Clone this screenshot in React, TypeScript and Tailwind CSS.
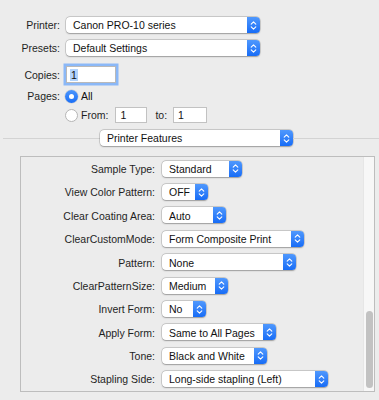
import React from "react";

const font = { fontFamily: '"Liberation Sans", Arial, sans-serif' };

function Chevrons() {
  return (
    <svg width="7" height="11" viewBox="0 0 7 11" fill="none">
      <polyline points="1.2,4.2 3.5,1.9 5.8,4.2" stroke="white" strokeWidth="1.1" strokeLinecap="round" strokeLinejoin="round" />
      <polyline points="1.2,6.8 3.5,9.1 5.8,6.8" stroke="white" strokeWidth="1.1" strokeLinecap="round" strokeLinejoin="round" />
    </svg>
  );
}

function Popup({ value, width }: { value: string; width: number }) {
  return (
    <div
      className="flex h-[16px] shrink-0 items-stretch rounded-[4px] bg-white shadow-[0_0_0_0.5px_rgba(0,0,0,0.22),0_0.5px_1.5px_rgba(0,0,0,0.25)]"
      style={{ width }}
    >
      <div className="flex flex-1 items-center overflow-hidden whitespace-nowrap pl-[7px] pt-px text-[10.5px] leading-none text-[#111111]">
        {value}
      </div>
      <div className="flex w-[13px] items-center justify-center rounded-r-[4px] bg-gradient-to-b from-[#4f98fd] to-[#166cf6]">
        <Chevrons />
      </div>
    </div>
  );
}

const rows: [string, string, number][] = [
  ["Sample Type:", "Standard", 80],
  ["View Color Pattern:", "OFF", 46],
  ["Clear Coating Area:", "Auto", 64],
  ["ClearCustomMode:", "Form Composite Print", 142],
  ["Pattern:", "None", 134],
  ["ClearPatternSize:", "Medium", 66],
  ["Invert Form:", "No", 44],
  ["Apply Form:", "Same to All Pages", 114],
  ["Tone:", "Black and White", 105],
  ["Stapling Side:", "Long-side stapling (Left)", 166],
];

function Label({ children }: { children: React.ReactNode }) {
  return (
    <div className="w-[60px] shrink-0 pt-px text-right text-[10.5px] leading-none text-[#1f1f1f]">{children}</div>
  );
}

export default function App() {
  return (
    <div className="relative h-[400px] w-[379px] overflow-hidden bg-[#ececec]" style={font}>
      {/* Printer */}
      <div className="mt-[17px] flex h-[16px] items-center gap-[6px]">
        <Label>Printer:</Label>
        <Popup value="Canon PRO-10 series" width={194} />
      </div>
      {/* Presets */}
      <div className="mt-[7px] flex h-[16px] items-center gap-[6px]">
        <Label>Presets:</Label>
        <Popup value="Default Settings" width={194} />
      </div>
      {/* Copies */}
      <div className="mt-[10px] flex h-[17px] items-center gap-[6px]">
        <Label>Copies:</Label>
        <div className="flex h-[17px] w-[50px] items-center border border-[#b9b9b9] bg-white pl-[3px] pt-px shadow-[0_0_0_2.5px_#8bb8f7] text-[10.5px] leading-none text-[#111111]">
          <span className="bg-[#b3d4fc] px-[1px] py-[1px]">1</span>
        </div>
      </div>
      {/* Pages */}
      <div className="mt-[6px] flex h-[14px] items-center gap-[5px]">
        <Label>Pages:</Label>
        <div className="flex h-[13px] w-[13px] items-center justify-center rounded-full bg-gradient-to-b from-[#4b95fc] to-[#186ef6] shadow-[0_0_0_0.5px_rgba(0,0,0,0.15)]">
          <div className="h-[5px] w-[5px] rounded-full bg-white" />
        </div>
        <span className="-ml-[2px] pt-px text-[10.5px] leading-none text-[#111111]">All</span>
      </div>
      {/* From */}
      <div className="mt-[4px] flex h-[16px] items-center">
        <div className="ml-[65px] h-[13px] w-[13px] rounded-full border border-[#b5b5b5] bg-white" />
        <span className="ml-[3px] pt-px text-[10.5px] leading-none text-[#1f1f1f]">From:</span>
        <div className="ml-[7px] flex h-[16px] w-[32px] items-center border border-[#c2c2c2] bg-white pl-[4px] pt-px text-[10.5px] leading-none text-[#111111]">
          1
        </div>
        <span className="ml-[8px] pt-px text-[10.5px] leading-none text-[#1f1f1f]">to:</span>
        <div className="ml-[6px] flex h-[16px] w-[34px] items-center border border-[#c2c2c2] bg-white pl-[4px] pt-px text-[10.5px] leading-none text-[#111111]">
          1
        </div>
      </div>
      {/* Separator with Printer Features */}
      <div className="mt-[7px] flex h-[16px] items-center">
        <div className="ml-[3px] h-px w-[97px] bg-[#d3d3d3]" />
        <Popup value="Printer Features" width={193} />
        <div className="h-px flex-1 bg-[#d3d3d3]" />
      </div>
      {/* Panel */}
      <div className="relative ml-[20px] mt-[10px] h-[236px] w-[355px] border border-[#bdbdbd]">
        <div className="flex flex-col">
          {rows.map(([label, value, w]) => (
            <div key={label} className="flex h-[23.4px] items-center gap-[7px]">
              <div className="w-[134px] shrink-0 pt-px text-right text-[10.5px] leading-none text-[#1f1f1f]">{label}</div>
              <Popup value={value} width={w} />
            </div>
          ))}
        </div>
        <div className="absolute bottom-0 right-0 top-0 w-[11px] border-l border-[#e6e6e6] bg-[#f7f7f7]">
          <div className="absolute left-[2px] top-[154px] h-[77px] w-[7px] rounded-full bg-[#c2c2c2]" />
        </div>
      </div>
    </div>
  );
}
